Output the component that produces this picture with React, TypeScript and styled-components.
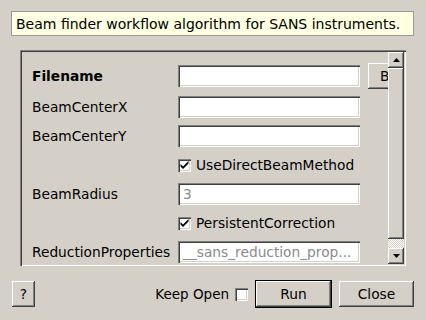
import styled, { createGlobalStyle } from 'styled-components';

const colors = {
	face: '#d4d0c8',
	light: '#ffffff',
	shadow: '#808080',
	dark: '#404040',
	tip: '#ffffe1',
	muted: '#8a8a8a',
};

const raised = `
	box-shadow: inset -1px -1px ${colors.dark}, inset 1px 1px ${colors.light},
		inset -2px -2px ${colors.shadow}, inset 2px 2px ${colors.face};
`;

const sunken = `
	box-shadow: inset 1px 1px ${colors.shadow}, inset 2px 2px ${colors.dark},
		inset -1px -1px ${colors.light}, inset -2px -2px ${colors.face};
`;

const GlobalStyle = createGlobalStyle`
	html, body {
		margin: 0;
		background: ${colors.face};
	}
	body {
		font-family: 'DejaVu Sans', Verdana, sans-serif;
		font-size: 13.75px;
		color: #000;
	}
`;

const Dialog = styled.div`
	width: 426px;
	height: 320px;
	box-sizing: border-box;
	padding: 11px 12px 12px 11px;
	display: flex;
	flex-direction: column;
`;

const Description = styled.div`
	height: 25px;
	box-sizing: border-box;
	border: 1px solid #9a9a9a;
	background: ${colors.tip};
	padding: 0 4px;
	display: flex;
	align-items: center;
	white-space: nowrap;
	font-size: 14px;
`;

const ScrollFrame = styled.div`
	margin: 14px 8px 0 9px;
	height: 216px;
	box-sizing: border-box;
	padding: 2px;
	display: flex;
	${sunken}
`;

const Viewport = styled.div`
	flex: 1;
	overflow: hidden;
	padding: 11px 0 0 10px;
`;

const Form = styled.div`
	display: grid;
	grid-template-columns: 146px 182px 83px;
	grid-template-rows: 26px;
	grid-auto-rows: 22px;
	row-gap: 7px;
	align-items: center;
	width: 411px;
`;

const Label = styled.div<{ $bold?: boolean }>`
	grid-column: 1;
	font-weight: ${p => (p.$bold ? 'bold' : 'normal')};
	white-space: nowrap;
`;

const Field = styled.div`
	grid-column: 2;
	height: 22px;
	box-sizing: border-box;
	background: ${colors.light};
	padding: 0 5px;
	display: flex;
	align-items: center;
	color: ${colors.muted};
	white-space: nowrap;
	overflow: hidden;
	${sunken}
`;

const BrowseButton = styled.div`
	grid-column: 3;
	height: 26px;
	width: 75px;
	box-sizing: border-box;
	margin-left: 8px;
	padding-left: 12px;
	display: flex;
	align-items: center;
	${raised}
`;

const CheckLine = styled.label`
	grid-column: 2 / span 2;
	display: flex;
	align-items: center;
	gap: 5px;
	white-space: nowrap;
`;

const Box = styled.span`
	width: 13px;
	height: 13px;
	box-sizing: border-box;
	background: ${colors.light};
	display: inline-flex;
	flex-shrink: 0;
	${sunken}
`;

const ScrollBar = styled.div`
	width: 16px;
	display: flex;
	flex-direction: column;
`;

const ArrowButton = styled.div`
	height: 16px;
	display: flex;
	align-items: center;
	justify-content: center;
	${raised}
`;

const Thumb = styled.div`
	flex: 1;
	${raised}
`;

const Trough = styled.div`
	height: 9px;
	background-color: ${colors.light};
	background-image: repeating-conic-gradient(${colors.face} 0 25%, ${colors.light} 0 50%);
	background-size: 2px 2px;
`;

const BottomBar = styled.div`
	margin-top: auto;
	height: 28px;
	display: flex;
	align-items: center;
	padding-left: 1px;
`;

const HelpButton = styled.div`
	width: 23px;
	height: 26px;
	display: flex;
	align-items: center;
	justify-content: center;
	${raised}
`;

const KeepOpen = styled.label`
	margin-left: auto;
	display: flex;
	align-items: center;
	gap: 6px;
	margin-right: 7px;
	font-size: 13.5px;
`;

const PushButton = styled.div<{ $default?: boolean }>`
	width: 75px;
	height: 26px;
	display: flex;
	align-items: center;
	justify-content: center;
	${raised}
	${p => (p.$default ? 'outline: 1px solid #000; margin: 0 8px 0 1px;' : '')}
`;

function Check({ checked }: { checked?: boolean }) {
	return (
		<Box>
			{checked && (
				<svg width="13" height="13" viewBox="0 0 13 13">
					<path d="M2.5 5 L2.5 7.5 L5 10 L10.5 4.5 L10.5 2 L5 7.5 Z" fill="#000" />
				</svg>
			)}
		</Box>
	);
}

function Arrow({ down }: { down?: boolean }) {
	return (
		<svg width="7" height="4" viewBox="0 0 7 4">
			<path d={down ? 'M0 0 H7 L3.5 4 Z' : 'M0 4 H7 L3.5 0 Z'} fill="#000" />
		</svg>
	);
}

export default function App() {
	return (
		<Dialog>
			<GlobalStyle />
			<Description>Beam finder workflow algorithm for SANS instruments.</Description>

			<ScrollFrame>
				<Viewport>
					<Form>
						<Label $bold>Filename</Label>
						<Field />
						<BrowseButton>Browse</BrowseButton>
						<Label>BeamCenterX</Label>
						<Field />
						<Label>BeamCenterY</Label>
						<Field />
						<CheckLine>
							<Check checked />
							UseDirectBeamMethod
						</CheckLine>
						<Label>BeamRadius</Label>
						<Field>3</Field>
						<CheckLine>
							<Check checked />
							PersistentCorrection
						</CheckLine>
						<Label>ReductionProperties</Label>
						<Field>__sans_reduction_prop...</Field>
					</Form>
				</Viewport>
				<ScrollBar>
					<ArrowButton>
						<Arrow />
					</ArrowButton>
					<Thumb />
					<Trough />
					<ArrowButton>
						<Arrow down />
					</ArrowButton>
				</ScrollBar>
			</ScrollFrame>

			<BottomBar>
				<HelpButton>?</HelpButton>
				<KeepOpen>
					Keep Open
					<Check />
				</KeepOpen>
				<PushButton $default>Run</PushButton>
				<PushButton>Close</PushButton>
			</BottomBar>
		</Dialog>
	);
}
